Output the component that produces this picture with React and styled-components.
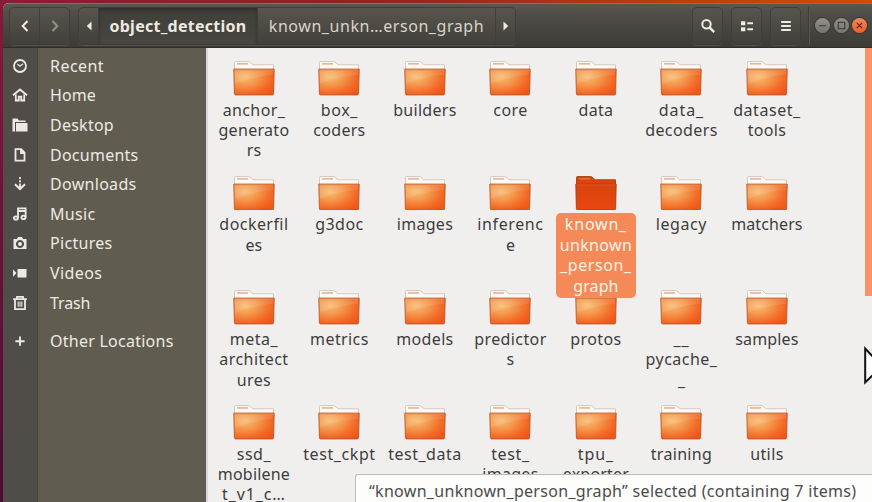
import React from "react";
import styled, { createGlobalStyle } from "styled-components";

const Global = createGlobalStyle`
  * { box-sizing: border-box; }
  body { margin: 0; overflow: hidden; font: 16px "Noto Sans", sans-serif; }
  svg { flex: none; }
`;

const Desktop = styled.div`
  width: 872px;
  height: 502px;
  padding: 3px 0 0 3px;
  overflow: hidden;
  background:
    linear-gradient(90deg, #8c1a38 0, #86202e 130px, #8e2a1d 420px, #b23b10 620px, #d6480f 872px) 0 0 / 100% 6px no-repeat,
    linear-gradient(#851a38, #74143a 30%, #4c0b33);
`;

const Window = styled.main`
  position: relative;
  display: flex;
  flex-direction: column;
  width: 869px;
  height: 499px;
  border-radius: 6px 0 0 0;
  overflow: hidden;
  background: #f1efed;
`;

const Header = styled.header`
  flex: none;
  display: flex;
  align-items: center;
  height: 45px;
  padding: 0 5px 0 6px;
  color: #dfdbd2;
  background: linear-gradient(#5a584f, #504e47 20%, #3d3b37);
  border-top: 1px solid #77746a;
  border-bottom: 1px solid #2f2d29;
`;

const Group = styled.div`
  display: flex;
  height: 38px;
  margin-right: ${(p) => p.$gap || 0}px;
  border: 1px solid #403e39;
  border-radius: 5px;
  overflow: hidden;
  background: linear-gradient(#57554d, #42403b);
  box-shadow: 0 1px 0 #53514a;
`;

const Button = styled.button`
  display: flex;
  align-items: center;
  justify-content: center;
  width: ${(p) => p.$w}px;
  padding: 0;
  border: 0;
  border-right: ${(p) => (p.$last ? "0" : "1px solid #403e39")};
  color: ${(p) => (p.$dim ? "#94918a" : "#f0ece4")};
  background: ${(p) => (p.$active ? "linear-gradient(#3f3e39, #484640)" : "none")};
  box-shadow: ${(p) => (p.$active ? "inset 0 2px 3px #302f2b" : "none")};
  font: ${(p) => (p.$active ? "bold 16px" : "16px")} "Noto Sans", sans-serif;
  letter-spacing: ${(p) => p.$spacing || 0}px;
  white-space: nowrap;
`;

const PathText = styled.span`
  color: ${(p) => (p.$strong ? "#eeeae1" : "#d8d4ca")};
`;

const Spacer = styled.div`
  flex: 1;
`;

const Divider = styled.div`
  width: 2px;
  height: 38px;
  margin-right: 2px;
  background: linear-gradient(90deg, #3d3b36 50%, #59574f 50%);
`;

const WindowButton = styled.button`
  display: flex;
  align-items: center;
  justify-content: center;
  width: 15px;
  height: 15px;
  margin-left: 3.3px;
  padding: 0;
  border: 0;
  border-radius: 50%;
  color: ${(p) => (p.$close ? "#5c2611" : "#383732")};
  background: ${(p) => (p.$close ? "linear-gradient(#f5865a, #ea5f2b)" : "linear-gradient(#929089, #77756d)")};
  box-shadow: 0 0 0 1px #3a3833;
`;

const Body = styled.div`
  flex: 1;
  display: flex;
  min-height: 0;
`;

const Sidebar = styled.nav`
  flex: none;
  width: 203px;
  padding-top: 3px;
  background: linear-gradient(90deg, #504d48 34px, #46443e 34px, #46443e 35px, #615c50 35px);
`;

const Place = styled.div`
  display: grid;
  grid-template-columns: 35px 1fr;
  align-items: center;
  height: 29.6px;
  margin-top: ${(p) => (p.$apart ? 8.4 : 0)}px;
  color: #edeae3;
  svg { margin-left: 9.2px; }
`;

const PlaceName = styled.span`
  padding-left: 12px;
  letter-spacing: ${(p) => p.$spacing}px;
`;

const Files = styled.section`
  flex: 1;
  display: grid;
  grid-template-columns: repeat(7, 85.5px);
  grid-auto-rows: 114.7px;
  align-content: start;
  padding: 13px 0 0 3.2px;
  border-left: 2px solid #dcd9d4;
  overflow: hidden;
  color: #3d3d3d;
`;

const File = styled.div`
  display: flex;
  flex-direction: column;
  align-items: center;
  z-index: ${(p) => (p.$selected ? 1 : 0)};
`;

const Label = styled.div`
  width: 80px;
  margin-top: 2.5px;
  padding: 1.6px 0;
  border-radius: 5px;
  text-align: center;
  line-height: 20.4px;
  color: ${(p) => (p.$selected ? "#fff3e6" : "inherit")};
  background: ${(p) => (p.$selected ? "#f58a58" : "none")};
`;

const Line = styled.div`
  letter-spacing: ${(p) => p.$spacing}px;
  white-space: nowrap;
`;

const Scrollbar = styled.div`
  flex: none;
  width: 7px;
  height: 248px;
  background: #f69467;
`;

const Status = styled.footer`
  position: absolute;
  right: 0;
  bottom: 0;
  width: 517px;
  height: 28px;
  padding: 2px 0 0 13px;
  border: solid #bdbbb8;
  border-width: 1px 0 0 1px;
  border-radius: 3px 0 0 0;
  color: #4b4b4b;
  background: #fdfdfc;
  line-height: 29px;
  letter-spacing: 0.31px;
  white-space: nowrap;
  z-index: 2;
`;

const Pointer = styled.svg`
  position: absolute;
  left: 860px;
  top: 342px;
  z-index: 3;
`;

const Glyph = ({ children, size = 16 }) => (
  <svg width={size} height={size} viewBox="0 0 16 16" fill="none" stroke="currentColor" strokeWidth="2">
    {children}
  </svg>
);

const places = [
  ["Recent", 0.45, <><circle cx="8" cy="8" r="6" strokeWidth="1.8" /><path d="M5.3 6 8 8.3 11 5.7" strokeWidth="1.2" /></>],
  ["Home", 0.1, <><path d="M1 8.3 8 2.5 15 8.3" /><path d="M3.8 7.5v6h3V9.7h2.4v3.8h3v-6" strokeWidth="1.8" /></>],
  ["Desktop", 0.25, <><path d="M.5 1.5h5l1.4 2h6.6V5H3v9.5H.5Z" fill="currentColor" stroke="none" /><path d="M4 6h11.5v8.5H4Z" fill="currentColor" stroke="none" /></>],
  ["Documents", 0.25, <path d="M3.5 2.2h5.7l3.3 3.5v8H3.5ZM9 2.5V6h3.5" strokeWidth="1.8" />],
  ["Downloads", 0.3, <><path d="M8 1v2M8 4.2v2M8 7.5V12" strokeWidth="1.8" /><path d="M3 8.2 8 13l5-4.8" /></>],
  ["Music", 0.3, <><path d="M6 12V2.4h7.6v9M6 5h7.6" strokeWidth="1.8" /><ellipse cx="3.9" cy="12" rx="2" ry="1.7" strokeWidth="1.8" /><ellipse cx="11.5" cy="11.4" rx="2" ry="1.7" strokeWidth="1.8" /></>],
  ["Pictures", 0.3, <><path fillRule="evenodd" d="M1.5 4H5l1-2h4l1 2h3.5v10h-13ZM8 5a4 4 0 1 0 .01 0Z" fill="currentColor" stroke="none" /><circle cx="8" cy="9" r="2" fill="currentColor" stroke="none" /></>],
  ["Videos", 0.4, <path d="M5.5 4h9v8.5h-9ZM1 4.5l3.5 3.6L1 11.8Z" fill="currentColor" stroke="none" />],
  ["Trash", -0.1, <><path d="M1.2 4.2h13.6M5 3.5V1.8h6v1.7M3 4.5v9.6h10V4.5" strokeWidth="1.8" /><path d="M6.2 6.5v5.3M8 6.5v5.3M9.8 6.5v5.3" strokeWidth="1.1" /></>],
  ["Other Locations", 0.25, <path d="M8 3.6v9.2M3.4 8.2h9.2" strokeWidth="1.9" />],
];

// Each folder is a list of [text, letter spacing] lines.
const folders = [
  [["anchor_", 0.4], ["generato", 0.3], ["rs", 0]],
  [["box_", 0.6], ["coders", 0.3]],
  [["builders", 0.3]],
  [["core", 0.4]],
  [["data", 0.3]],
  [["data_", 0.9], ["decoders", 0.4]],
  [["dataset_", 0.55], ["tools", 0.3]],
  [["dockerfil", 0.45], ["es", 0.2]],
  [["g3doc", 0.45]],
  [["images", 0.3]],
  [["inferenc", 0.6], ["e", 0]],
  [["known_", 0.8], ["unknown", 0.35], ["_person_", 0.6], ["graph", 0.1]],
  [["legacy", 0.6]],
  [["matchers", 0.1]],
  [["meta_", 0.5], ["architect", 0.45], ["ures", 0.4]],
  [["metrics", 0.4]],
  [["models", 0.35]],
  [["predictor", 0.4], ["s", 0]],
  [["protos", 0.4]],
  [["__", 0.8], ["pycache_", 0.45], ["_", 0]],
  [["samples", 0.15]],
  [["ssd_", 0.55], ["mobilene", 0.2], ["t_v1_c…", 0.9]],
  [["test_ckpt", 0.6]],
  [["test_data", 0.5]],
  [["test_", 0.65], ["images", 0.3]],
  [["tpu_", 0.95], ["exporter", 0.2]],
  [["training", 0.3]],
  [["utils", 0.4]],
];
const selectedIndex = 11;

const FolderIcon = ({ selected }) => (
  <svg width="42" height="34.5" viewBox="0 0 42 35" preserveAspectRatio="none">
    <path
      d="M1.5 9V1.5Q1.5.5 2.5.5H15.5Q17 .5 18 2L20 3.8H40.5V9Z"
      fill={selected ? "#d9450f" : "#fcfaf7"}
      stroke={selected ? "#a83a12" : "#cfc3b8"}
      strokeWidth=".9"
    />
    <path d="M4 3H15" stroke={selected ? "#ef7440" : "#dda27c"} strokeWidth="1.3" />
    <path
      d="M.8 8.2H41.2L40.6 33.3Q40.5 34.4 39.5 34.4H2.5Q1.5 34.4 1.4 33.3Z"
      fill={selected ? "url(#folderHot)" : "url(#folder)"}
      stroke={selected ? "#a93a10" : "#b5562a"}
      strokeWidth=".9"
    />
    <path d="M1.6 9.1H40.4" stroke={selected ? "#ee6030" : "#e88f58"} strokeWidth=".8" />
    {!selected && <path d="M1.5 9.3H40.3L40.1 14Q22 15.5 2 23Z" fill="#fff" opacity=".1" />}
  </svg>
);

const Gradients = styled.svg`
  position: absolute;
`;

export default function App() {
  return (
    <Desktop>
      <Global />
      <Gradients width="0" height="0">
        <defs>
          <radialGradient id="folder" cx=".28" cy=".3" r=".85">
            <stop offset="0" stopColor="#f8bd74" />
            <stop offset=".4" stopColor="#f4954a" />
            <stop offset=".75" stopColor="#f36a26" />
            <stop offset="1" stopColor="#ef571a" />
          </radialGradient>
          <linearGradient id="folderHot" x1="0" y1="0" x2="0" y2="1">
            <stop offset="0" stopColor="#d8440d" />
            <stop offset="1" stopColor="#ea4610" />
          </linearGradient>
        </defs>
      </Gradients>
      <Window>
        <Header>
          <Group $gap={8}>
            <Button $w={30}><Glyph><path d="M10.5 3 5.7 8l4.8 5" /></Glyph></Button>
            <Button $w={29} $dim $last><Glyph><path d="M5.5 3l4.8 5-4.8 5" /></Glyph></Button>
          </Group>
          <Group>
            <Button $w={20}><Glyph><path d="M10.5 3.6v8.8L5.8 8Z" fill="currentColor" stroke="none" /></Glyph></Button>
            <Button $w={159} $active $spacing={0.27}><PathText $strong>object_detection</PathText></Button>
            <Button $w={238} $spacing={0.56}><PathText>known_unkn…erson_graph</PathText></Button>
            <Button $w={19} $last><Glyph><path d="M5.5 3.6v8.8L10.2 8Z" fill="currentColor" stroke="none" /></Glyph></Button>
          </Group>
          <Spacer />
          <Group $gap={8}>
            <Button $w={29} $last><Glyph><circle cx="6.5" cy="6.3" r="4.2" /><path d="m9.5 9.4 4.7 4.8" strokeWidth="2.4" /></Glyph></Button>
          </Group>
          <Group $gap={8}>
            <Button $w={29} $last><Glyph><path d="M2 3.3h4.3v4H2ZM2 9.2h4.3v4H2ZM8.3 4.2H14v2H8.3ZM8.3 10.2H14v2H8.3Z" fill="currentColor" stroke="none" /></Glyph></Button>
          </Group>
          <Group $gap={7}>
            <Button $w={29} $last><Glyph><path d="M3.2 4h9.6M3.2 8h9.6M3.2 12h9.6" /></Glyph></Button>
          </Group>
          <Divider />
          <WindowButton><Glyph size={13}><path d="M3.5 8.3h9" strokeWidth="1.3" /></Glyph></WindowButton>
          <WindowButton><Glyph size={13}><path d="M4 4h8v8H4Z" strokeWidth="1.3" /></Glyph></WindowButton>
          <WindowButton $close><Glyph size={13}><path d="m4.7 4.7 6.6 6.6M11.3 4.7l-6.6 6.6" strokeWidth="1.4" /></Glyph></WindowButton>
        </Header>
        <Body>
          <Sidebar>
            {places.map(([name, spacing, icon]) => (
              <Place key={name} $apart={name === "Other Locations"}>
                <Glyph>{icon}</Glyph>
                <PlaceName $spacing={spacing}>{name}</PlaceName>
              </Place>
            ))}
          </Sidebar>
          <Files>
            {folders.map((lines, i) => (
              <File key={i} $selected={i === selectedIndex}>
                <FolderIcon selected={i === selectedIndex} />
                <Label $selected={i === selectedIndex}>
                  {lines.map(([text, spacing]) => (
                    <Line key={text} $spacing={spacing}>{text}</Line>
                  ))}
                </Label>
              </File>
            ))}
          </Files>
          <Scrollbar />
        </Body>
        <Status>“known_unknown_person_graph” selected (containing 7 items)</Status>
        <Pointer width="24" height="50" viewBox="0 0 24 50">
          <path d="M2.2 3.5V37.5L10 30l5 12 5-2-5-12h10Z" fill="#fff" stroke="#111" strokeWidth="2" />
        </Pointer>
      </Window>
    </Desktop>
  );
}
